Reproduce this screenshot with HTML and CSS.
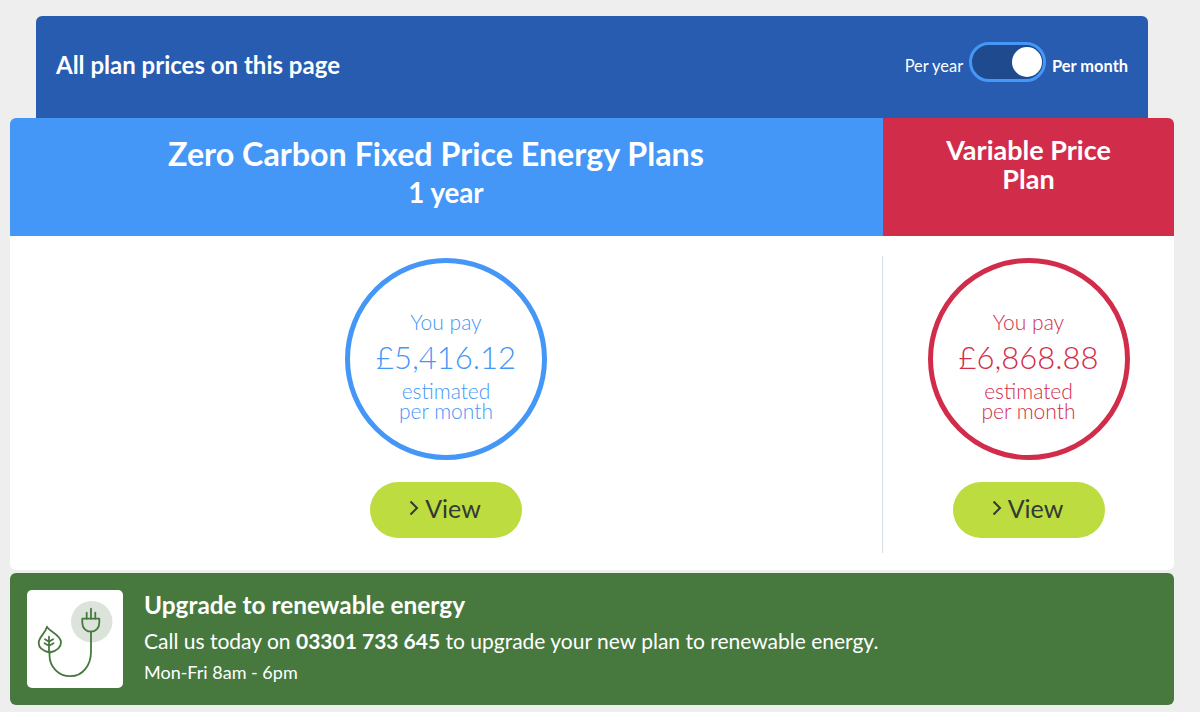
FILE: index.html
```html
<!DOCTYPE html>
<html lang="en">
<head>
    <meta charset="UTF-8">
    <meta name="viewport" content="width=device-width, initial-scale=1.0">
    <title>Energy plan prices</title>
    <link rel="stylesheet" href="styles.css">
</head>
<body>
<div class="container">
    <div class="price-bar">
        <h2>All plan prices on this page</h2>
        <div class="price-switch">
            <span class="switch-label">Per year</span>
            <div class="toggle"><div class="toggle-knob"></div></div>
            <strong class="switch-label">Per month</strong>
        </div>
    </div>

    <div class="plans-head">
        <div class="head-fixed">
            <h1>Zero Carbon Fixed Price Energy Plans</h1>
            <p>1 year</p>
        </div>
        <div class="head-variable">
            <h1>Variable Price Plan</h1>
        </div>
    </div>

    <div class="plans">
        <div class="plan plan-fixed">
            <div class="circle">
                <span class="you-pay">You pay</span>
                <span class="amount">£5,416.12</span>
                <span class="period">estimated<br>per month</span>
            </div>
            <a class="view-btn" href="#">
                <svg width="10" height="16" viewBox="0 0 10 16" fill="none" stroke="#333a33" stroke-width="2"><path d="M1.500 1.500L8 8L1.500 14.500"/></svg>
                View
            </a>
        </div>
        <div class="plan plan-variable">
            <div class="circle">
                <span class="you-pay">You pay</span>
                <span class="amount">£6,868.88</span>
                <span class="period">estimated<br>per month</span>
            </div>
            <a class="view-btn" href="#">
                <svg width="10" height="16" viewBox="0 0 10 16" fill="none" stroke="#333a33" stroke-width="2"><path d="M1.500 1.500L8 8L1.500 14.500"/></svg>
                View
            </a>
        </div>
    </div>

    <div class="upgrade">
        <div class="upgrade-icon">
            <svg width="96" height="98" viewBox="0 0 96 98" fill="none" stroke="#47793f" stroke-width="1.8" stroke-linecap="round" stroke-linejoin="round">
                <circle cx="64.700" cy="31.700" r="20.700" fill="#dbe3da" stroke="none"/>
                <path d="M55.300 28.700h17v4c0 5-3.500 9-8.500 9s-8.500-4-8.500-9z"/>
                <path d="M59.700 28.700v-6M64 28.700v-10M68.300 28.700v-6"/>
                <path d="M64 41.700v20c0 13-8 24.500-20.500 24.500-12 0-21-9.500-21-21v-4"/>
                <path d="M20 36.700c1 4 14 8 14 15.500 0 6-5.500 9-11.300 10.300-5.700-1.300-11-3.500-11-9.500 0-6 6.300-9 8.300-16.300z"/>
                <path d="M22 46.700v15.500M22 51.700l-4-2.500M22 51.700l4-2.500M22 55.700l-4.500-2.500M22 55.700l4.500-2.500"/>
            </svg>
        </div>
        <div class="upgrade-text">
            <h3>Upgrade to renewable energy</h3>
            <p class="call">Call us today on <strong>03301 733 645</strong> to upgrade your new plan to renewable energy.</p>
            <p class="hours">Mon-Fri 8am - 6pm</p>
        </div>
    </div>
</div>
</body>
</html>
```

FILE: styles.css
```css
body {
    font-family: "Lato", "Noto Sans", sans-serif;
    margin: 0;
    background-color: #eeeeee;
    color: #fff;
}
.container {
    padding: 16px 26px 0 10px;
    height: 696px;
    overflow: hidden;
}
h1, h2, h3, p {
    margin: 0;
}
.price-bar {
    margin: 0 0 0 26px;
    width: 1112px;
    height: 102px;
    box-sizing: border-box;
    padding: 0 20px 10px 20px;
    background-color: #275cb1;
    border-radius: 6px 6px 0 0;
    display: flex;
    align-items: center;
    justify-content: space-between;
}
.price-bar h2 {
    font-size: 24px;
    font-weight: 700;
    margin-top: 4px;
}
.price-switch {
    display: flex;
    align-items: center;
    gap: 6px;
    font-size: 16.4px;
}
.switch-label {
    margin-top: 7px;
}
.toggle {
    width: 77px;
    height: 40px;
    box-sizing: border-box;
    border: 3px solid #4497f7;
    border-radius: 20px;
    background-color: #1f4a8e;
    display: flex;
    align-items: center;
    justify-content: flex-end;
    padding-right: 1px;
}
.toggle-knob {
    width: 30px;
    height: 30px;
    border-radius: 50%;
    background-color: #fff;
}
.plans-head {
    display: flex;
    width: 1164px;
    height: 118px;
}
.head-fixed {
    width: 873px;
    background-color: #4497f7;
    text-align: center;
    padding-top: 17px;
    box-sizing: border-box;
    border-radius: 6px 0 0 0;
}
.head-fixed h1 {
    font-size: 32.25px;
    font-weight: 700;
    line-height: 38px;
    padding-right: 21px;
}
.head-fixed p {
    font-size: 27.7px;
    font-weight: 700;
    line-height: 36px;
    margin-top: 2px;
    padding-right: 1px;
}
.head-variable {
    width: 291px;
    background-color: #d22c4b;
    border-radius: 0 6px 0 0;
    text-align: center;
    padding: 17px 50px 0;
    box-sizing: border-box;
}
.head-variable h1 {
    font-size: 27px;
    font-weight: 700;
    line-height: 29px;
}
.plans {
    display: flex;
    width: 1164px;
    height: 334px;
    box-sizing: border-box;
    padding: 20px 0 17px;
    background-color: #fff;
    border-radius: 0 0 6px 6px;
}
.plan {
    display: flex;
    flex-direction: column;
    align-items: center;
    padding-top: 2px;
    box-sizing: border-box;
}
.plan-fixed {
    width: 873px;
    color: #4497f7;
    border-right: 1px solid #d5dfe5;
}
.plan-variable {
    width: 291px;
    color: #d22c4b;
}
.circle {
    width: 202px;
    height: 202px;
    box-sizing: border-box;
    border: 5px solid currentColor;
    border-radius: 50%;
    display: flex;
    flex-direction: column;
    align-items: center;
    padding-top: 47px;
    font-weight: 300;
    text-align: center;
}
.you-pay {
    font-size: 21px;
    line-height: 24px;
}
.amount {
    font-size: 31px;
    line-height: 46px;
}
.period {
    font-size: 21px;
    line-height: 20px;
    margin-top: 1px;
}
.view-btn {
    margin-top: 22px;
    width: 152px;
    height: 56px;
    border-radius: 28px;
    background-color: #bcdc3f;
    color: #333a33;
    font-size: 25px;
    text-decoration: none;
    display: flex;
    align-items: center;
    justify-content: center;
    gap: 6px;
    padding: 0 2px 4px 0;
    box-sizing: border-box;
}
.upgrade {
    margin-top: 3px;
    width: 1164px;
    height: 132px;
    box-sizing: border-box;
    padding: 17px;
    background-color: #47793f;
    border-radius: 6px;
    display: flex;
    gap: 21px;
}
.upgrade-icon {
    width: 96px;
    height: 98px;
    background-color: #fff;
    border-radius: 5px;
}
.upgrade-text h3 {
    font-size: 24.4px;
    font-weight: 700;
    line-height: 30px;
}
.call {
    font-size: 21px;
    line-height: 26px;
    margin-top: 8px;
}
.hours {
    font-size: 18px;
    line-height: 22px;
    margin-top: 7px;
}
```
